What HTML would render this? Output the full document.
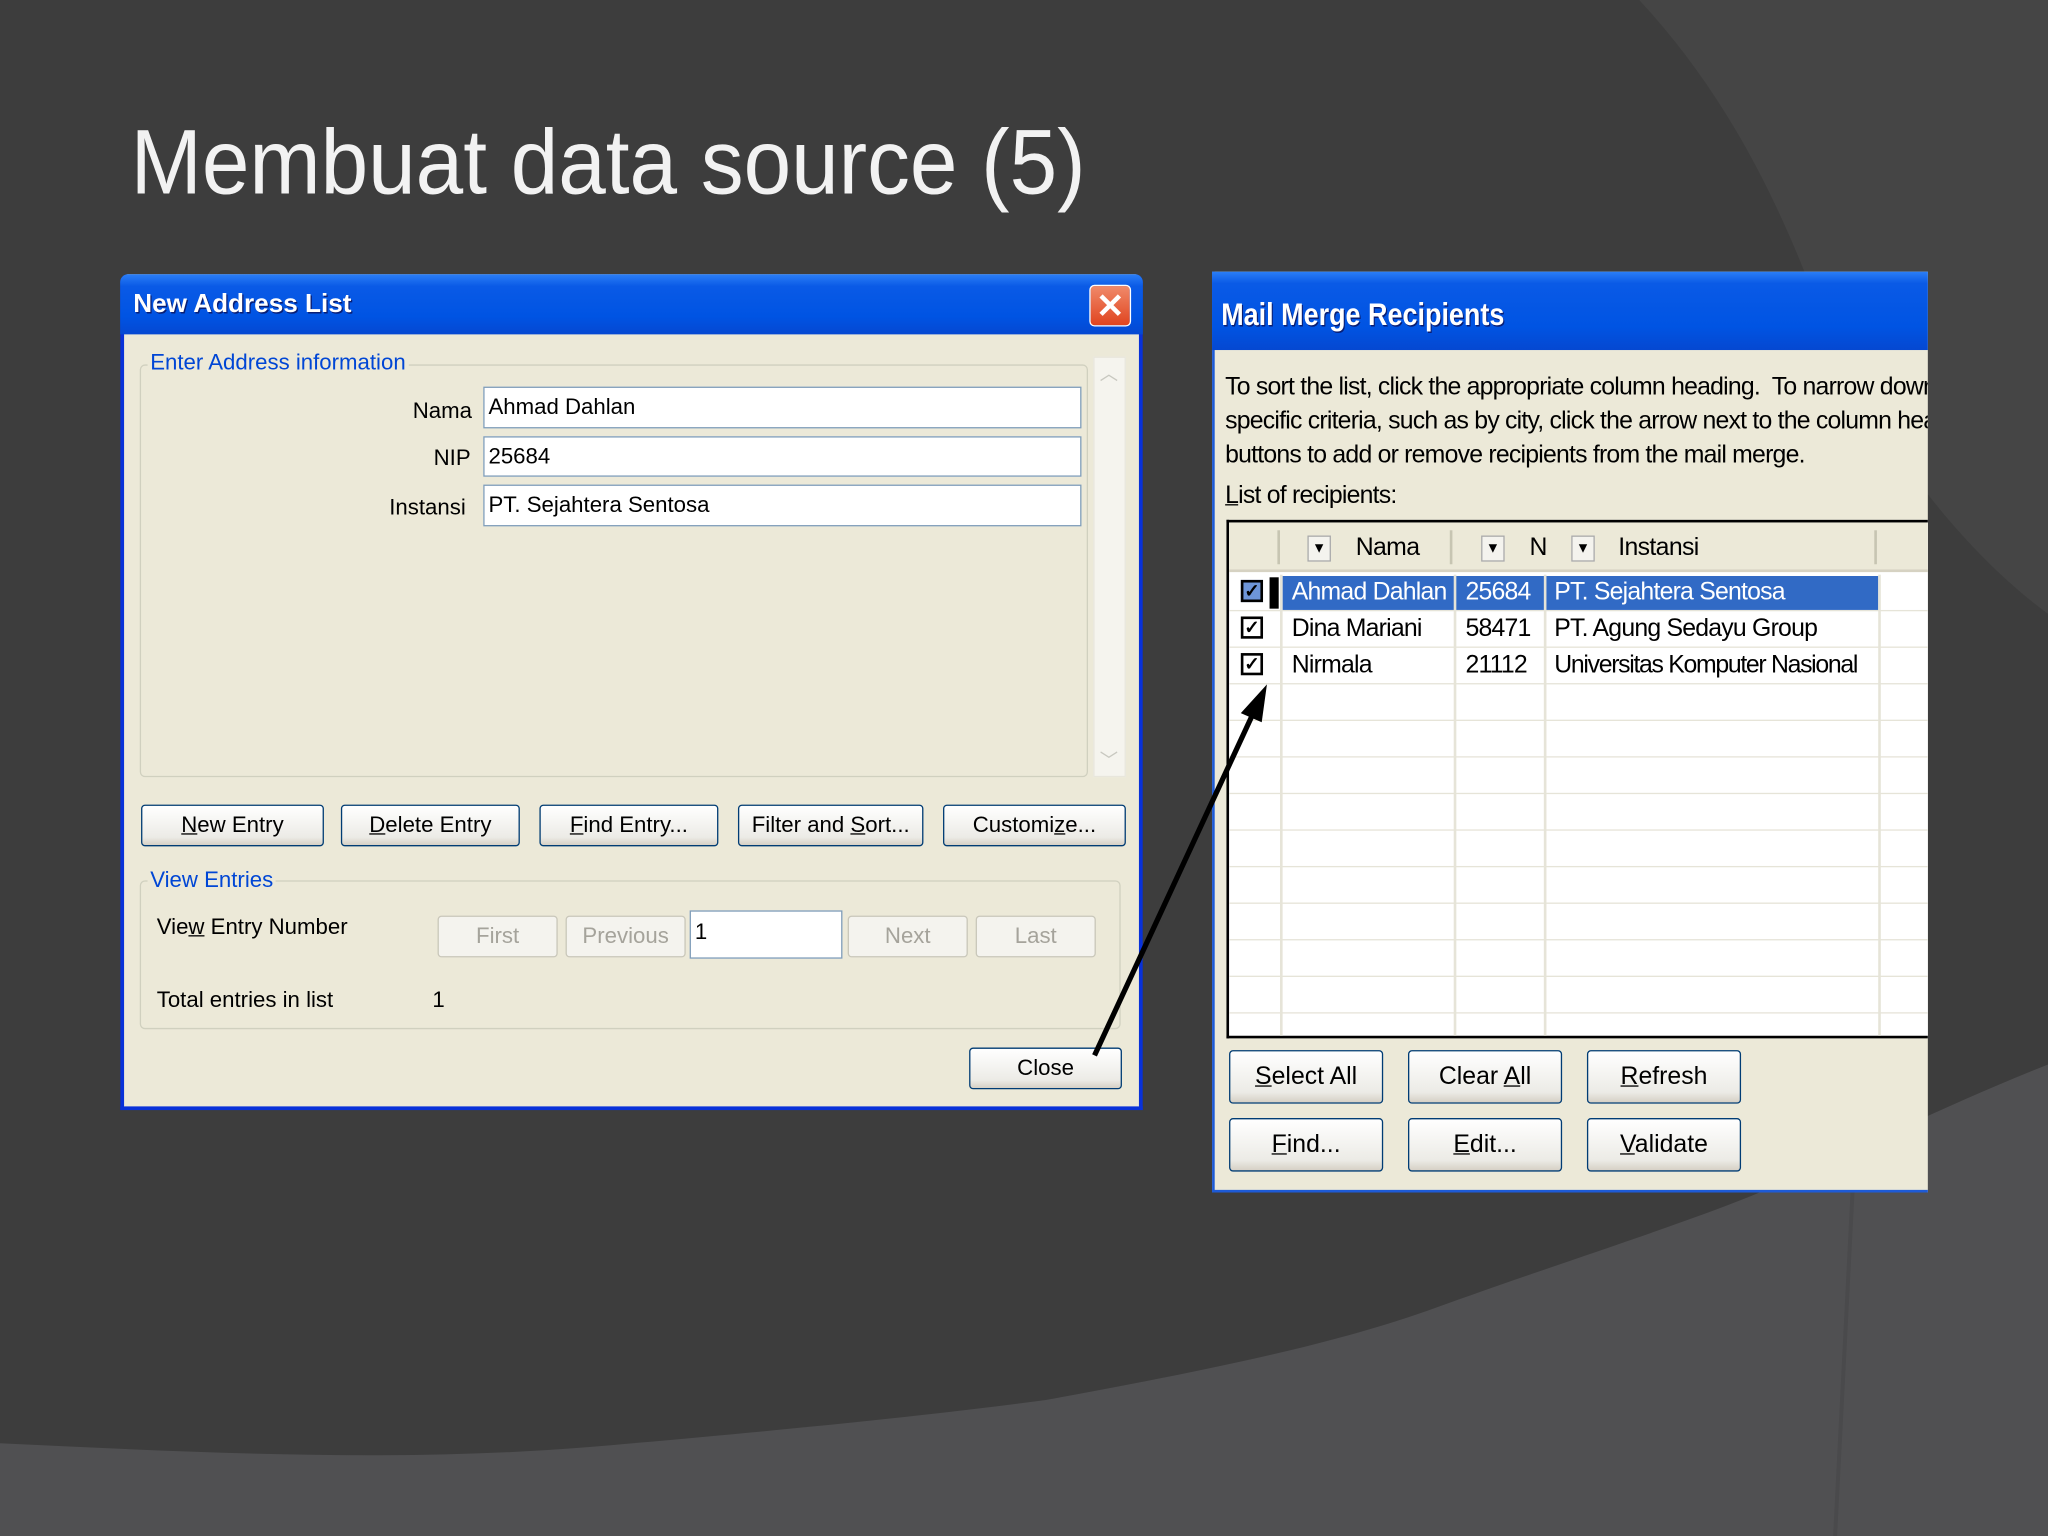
<!DOCTYPE html>
<html><head><meta charset="utf-8"><style>
*{margin:0;padding:0;box-sizing:border-box}
body{width:2048px;height:1536px;overflow:hidden;background:#3d3d3d;font-family:"Liberation Sans",sans-serif}
#w{position:absolute;left:0;top:0;width:1568px;height:1176px;transform:scale(1.306122);transform-origin:0 0}
.a{position:absolute}
.t{position:absolute;white-space:nowrap;font-size:17px;color:#000}
.btn{position:absolute;background:linear-gradient(#fff,#ecebe6 80%,#d6d0c5);border:1px solid #003c74;border-radius:3px;font-size:17px;text-align:center;color:#000;white-space:nowrap}
.dis{border-color:#c9c7ba;color:#a5a39b;background:#f4f3ee}
.fld{position:absolute;background:#fff;border:1px solid #7f9db9;font-size:17px;padding-left:3px;white-space:nowrap}
.grp{position:absolute;border:1px solid #d0d0bf;border-radius:4px}
.gl{position:absolute;background:#ece9d8;color:#0046d5;font-size:17px;padding:0 2px;white-space:nowrap}
.row{position:absolute;left:0;width:537px;height:1px;background:#e6e4d8}
</style></head><body><div id="w">
<svg class="a" style="left:0;top:0" width="1568" height="1176">
<rect width="1568" height="1176" fill="#3d3d3d"/>
<path d="M1255 0 C1320 70 1360 150 1390 230 C1430 330 1500 420 1568 470 L1568 0Z" fill="#454545"/>
<path d="M0 1105 C150 1112 300 1120 450 1108 C600 1095 700 1085 800 1072 C920 1050 1020 1030 1100 1001 C1200 965 1280 940 1340 916 C1420 882 1480 850 1568 815 L1568 1176 L0 1176Z" fill="#505052"/>
<path d="M1420 880 L1405 1176" stroke="#4a4a4c" stroke-width="3" fill="none"/>
</svg>
<div class="t" style="left:100px;top:84px;font-size:70px;color:#f2f2f2;transform:scaleX(.935);transform-origin:0 0">Membuat data source (5)</div>

<!-- Dialog 1 -->
<div class="a" style="left:92px;top:210px;width:783px;height:640px;background:#ece9d8;border:3px solid #0831d9;border-top:0;border-radius:6px 6px 0 0"></div>
<div class="a" style="left:92px;top:210px;width:783px;height:46px;background:linear-gradient(#2b7ef6,#0a5ae6 20%,#0054e3 70%,#0548d1);border-radius:6px 6px 0 0"></div>
<div class="t" style="left:102px;top:222px;font-size:20px;font-weight:bold;color:#fff;text-shadow:1px 1px #0a1e73">New Address List</div>
<div class="a" style="left:834px;top:218px;width:32px;height:32px;background:linear-gradient(#f08a6a,#e0441f);border:1px solid #fff;border-radius:4px;color:#fff;font-size:26px;line-height:30px;text-align:center;font-weight:bold">✕</div>
<div class="grp" style="left:107px;top:279px;width:726px;height:316px"></div>
<div class="gl" style="left:113px;top:268px">Enter Address information</div>
<div class="a" style="left:837px;top:273px;width:25px;height:322px;background:#f5f4ee;border:1px solid #e8e6dc"></div>
<div class="t" style="left:842px;top:276px;color:#c8c8c0;font-size:14px">︿</div>
<div class="t" style="left:842px;top:572px;color:#c8c8c0;font-size:14px">﹀</div>
<div class="t" style="left:316px;top:305px">Nama</div>
<div class="t" style="left:332px;top:341px">NIP</div>
<div class="t" style="left:298px;top:379px">Instansi</div>
<div class="fld" style="left:370px;top:296px;width:458px;height:32px;line-height:30px">Ahmad Dahlan</div>
<div class="fld" style="left:370px;top:334px;width:458px;height:31px;line-height:29px">25684</div>
<div class="fld" style="left:370px;top:371px;width:458px;height:32px;line-height:30px">PT. Sejahtera Sentosa</div>
<div class="btn" style="left:108px;top:616px;width:140px;height:32px;line-height:30px"><u>N</u>ew Entry</div>
<div class="btn" style="left:261px;top:616px;width:137px;height:32px;line-height:30px"><u>D</u>elete Entry</div>
<div class="btn" style="left:413px;top:616px;width:137px;height:32px;line-height:30px"><u>F</u>ind Entry...</div>
<div class="btn" style="left:565px;top:616px;width:142px;height:32px;line-height:30px">Filter and <u>S</u>ort...</div>
<div class="btn" style="left:722px;top:616px;width:140px;height:32px;line-height:30px">Customi<u>z</u>e...</div>
<div class="grp" style="left:107px;top:674px;width:751px;height:114px"></div>
<div class="gl" style="left:113px;top:664px">View Entries</div>
<div class="t" style="left:120px;top:700px">Vie<u>w</u> Entry Number</div>
<div class="btn dis" style="left:335px;top:701px;width:92px;height:32px;line-height:30px">First</div>
<div class="btn dis" style="left:433px;top:701px;width:92px;height:32px;line-height:30px">Previous</div>
<div class="fld" style="left:528px;top:697px;width:117px;height:37px;line-height:32px">1</div>
<div class="btn dis" style="left:649px;top:701px;width:92px;height:32px;line-height:30px">Next</div>
<div class="btn dis" style="left:747px;top:701px;width:92px;height:32px;line-height:30px">Last</div>
<div class="t" style="left:120px;top:756px">Total entries in list</div>
<div class="t" style="left:331px;top:756px">1</div>
<div class="btn" style="left:742px;top:802px;width:117px;height:32px;line-height:30px">Close</div>

<!-- Dialog 2 -->
<div class="a" style="left:928px;top:208px;width:548px;height:705px;background:#ece9d8;border-left:2px solid #1d5ad6;border-bottom:2px solid #1d5ad6"></div>
<div class="a" style="left:928px;top:208px;width:548px;height:60px;background:linear-gradient(#2b7ef6,#0a5ae6 15%,#0054e3 70%,#0548d1)"></div>
<div class="t" style="left:935px;top:228px;font-size:24px;font-weight:bold;color:#fff;text-shadow:1px 1px #0a1e73;transform:scaleX(.86);transform-origin:0 0">Mail Merge Recipients</div>
<div class="a" style="left:938px;top:284px;width:538px;height:80px;overflow:hidden;font-size:19px;line-height:26px;white-space:nowrap;letter-spacing:-0.6px">To sort the list, click the appropriate column heading.&nbsp; To narrow down<br>specific criteria, such as by city, click the arrow next to the column heading<br>buttons to add or remove recipients from the mail merge.</div>
<div class="t" style="left:938px;top:369px;font-size:19px;letter-spacing:-0.6px"><u>L</u>ist of recipients:</div>
<div class="a" style="left:939px;top:398px;width:537px;height:397px;background:#fff;border:2px solid #000;border-right:0;overflow:hidden">
 <div class="a" style="left:0;top:0;width:537px;height:38px;background:#ece9d8;border-bottom:2px solid #d6d2c2"></div>
 <div class="a" style="left:37px;top:6px;width:2px;height:26px;background:#c7c5b2"></div>
 <div class="a" style="left:169px;top:6px;width:2px;height:26px;background:#c7c5b2"></div>
 <div class="a" style="left:494px;top:6px;width:2px;height:26px;background:#c7c5b2"></div>
 <div class="a" style="left:60px;top:10px;width:18px;height:20px;border:1px solid #aaa;background:#f4f3ee;font-size:11px;text-align:center;line-height:18px">▼</div>
 <div class="a" style="left:193px;top:10px;width:18px;height:20px;border:1px solid #aaa;background:#f4f3ee;font-size:11px;text-align:center;line-height:18px">▼</div>
 <div class="a" style="left:262px;top:10px;width:18px;height:20px;border:1px solid #aaa;background:#f4f3ee;font-size:11px;text-align:center;line-height:18px">▼</div>
 <div class="t" style="left:97px;top:9px;font-size:19px;letter-spacing:-0.5px">Nama</div>
 <div class="t" style="left:230px;top:9px;font-size:19px">N</div>
 <div class="t" style="left:298px;top:9px;font-size:19px;letter-spacing:-0.5px">Instansi</div>
 <div class="a" style="left:41px;top:41px;width:456px;height:26px;background:#316ac5"></div>
 <div class="a" style="left:31px;top:42px;width:7px;height:24px;background:#000"></div>
 <div class="row" style="top:67px"></div><div class="row" style="top:95px"></div><div class="row" style="top:123px"></div>
 <div class="row" style="top:151px"></div><div class="row" style="top:179px"></div><div class="row" style="top:207px"></div>
 <div class="row" style="top:235px"></div><div class="row" style="top:263px"></div><div class="row" style="top:291px"></div>
 <div class="row" style="top:319px"></div><div class="row" style="top:347px"></div><div class="row" style="top:375px"></div>
 <div class="a" style="left:39px;top:40px;width:2px;height:360px;background:#e6e4d8"></div>
 <div class="a" style="left:172px;top:40px;width:2px;height:360px;background:#e6e4d8"></div>
 <div class="a" style="left:241px;top:40px;width:2px;height:360px;background:#e6e4d8"></div>
 <div class="a" style="left:497px;top:40px;width:2px;height:360px;background:#e6e4d8"></div>
 <div class="a" style="left:9px;top:44px;width:17px;height:17px;border:2px solid #000;background:#6d95d8;color:#000;font-size:14px;line-height:13px;text-align:center;font-weight:bold">✓</div>
 <div class="a" style="left:9px;top:72px;width:17px;height:17px;border:2px solid #000;background:#fff;font-size:14px;line-height:13px;text-align:center;font-weight:bold">✓</div>
 <div class="a" style="left:9px;top:100px;width:17px;height:17px;border:2px solid #000;background:#fff;font-size:14px;line-height:13px;text-align:center;font-weight:bold">✓</div>
 <div class="t" style="left:48px;top:43px;font-size:19px;color:#fff;letter-spacing:-0.6px">Ahmad Dahlan</div>
 <div class="t" style="left:181px;top:43px;font-size:19px;color:#fff;letter-spacing:-0.6px">25684</div>
 <div class="t" style="left:249px;top:43px;font-size:19px;color:#fff;letter-spacing:-0.6px">PT. Sejahtera Sentosa</div>
 <div class="t" style="left:48px;top:71px;font-size:19px;letter-spacing:-0.6px">Dina Mariani</div>
 <div class="t" style="left:181px;top:71px;font-size:19px;letter-spacing:-0.6px">58471</div>
 <div class="t" style="left:249px;top:71px;font-size:19px;letter-spacing:-0.6px">PT. Agung Sedayu Group</div>
 <div class="t" style="left:48px;top:99px;font-size:19px;letter-spacing:-0.6px">Nirmala</div>
 <div class="t" style="left:181px;top:99px;font-size:19px;letter-spacing:-0.6px">21112</div>
 <div class="t" style="left:249px;top:99px;font-size:19px;letter-spacing:-1px">Universitas Komputer Nasional</div>
</div>
<div class="btn" style="left:941px;top:804px;width:118px;height:41px;line-height:39px;font-size:19px"><u>S</u>elect All</div>
<div class="btn" style="left:1078px;top:804px;width:118px;height:41px;line-height:39px;font-size:19px">Clear <u>A</u>ll</div>
<div class="btn" style="left:1215px;top:804px;width:118px;height:41px;line-height:39px;font-size:19px"><u>R</u>efresh</div>
<div class="btn" style="left:941px;top:856px;width:118px;height:41px;line-height:39px;font-size:19px"><u>F</u>ind...</div>
<div class="btn" style="left:1078px;top:856px;width:118px;height:41px;line-height:39px;font-size:19px"><u>E</u>dit...</div>
<div class="btn" style="left:1215px;top:856px;width:118px;height:41px;line-height:39px;font-size:19px"><u>V</u>alidate</div>

<svg class="a" style="left:0;top:0" width="1568" height="1176">
<line x1="838" y1="808" x2="960" y2="545" stroke="#000" stroke-width="4"/>
<polygon points="970,524 950,546 966,553" fill="#000"/>
</svg>
</div></body></html>
